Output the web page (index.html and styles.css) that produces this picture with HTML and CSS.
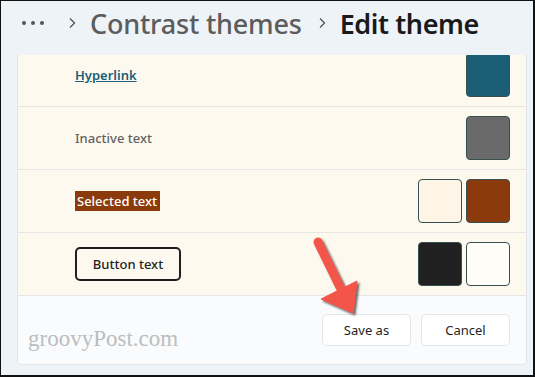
FILE: index.html
```html
<!DOCTYPE html>
<html lang="en">
<head>
    <meta charset="UTF-8">
    <meta name="viewport" content="width=device-width, initial-scale=1.0">
    <title>Edit theme</title>
    <link rel="stylesheet" href="styles.css">
</head>
<body>
    <div class="frame">
        <div class="breadcrumb">
            <svg class="more" width="24" height="6" viewBox="0 0 24 6">
                <circle cx="3" cy="3" r="2"/>
                <circle cx="12" cy="3" r="2"/>
                <circle cx="21" cy="3" r="2"/>
            </svg>
            <svg class="chevron" width="8" height="12" viewBox="0 0 8 12">
                <polyline points="2,1.5 6.5,6 2,10.5"/>
            </svg>
            <span class="crumb">Contrast themes</span>
            <svg class="chevron" width="8" height="12" viewBox="0 0 8 12">
                <polyline points="2,1.5 6.5,6 2,10.5"/>
            </svg>
            <span class="crumb current">Edit theme</span>
        </div>

        <div class="panel">
            <div class="list">
                <div class="row">
                    <a class="link-text" href="#">Hyperlink</a>
                    <div class="swatches">
                        <span class="swatch teal"></span>
                    </div>
                </div>
                <div class="row">
                    <span class="inactive-text">Inactive text</span>
                    <div class="swatches">
                        <span class="swatch gray"></span>
                    </div>
                </div>
                <div class="row">
                    <span class="selected-text">Selected text</span>
                    <div class="swatches">
                        <span class="swatch cream"></span>
                        <span class="swatch rust"></span>
                    </div>
                </div>
                <div class="row">
                    <span class="button-text">Button text</span>
                    <div class="swatches">
                        <span class="swatch black"></span>
                        <span class="swatch white"></span>
                    </div>
                </div>
            </div>
            <div class="footer">
                <button class="btn">Save as</button>
                <button class="btn">Cancel</button>
            </div>
        </div>

        <div class="watermark">groovyPost.com</div>

        <svg class="arrow" width="60" height="90" viewBox="0 0 60 90">
            <defs>
                <filter id="shade" x="-30%" y="-30%" width="160%" height="160%">
                    <feDropShadow dx="2" dy="2" stdDeviation="1.2" flood-color="#333" flood-opacity="0.75"/>
                </filter>
            </defs>
            <g filter="url(#shade)" fill="#f4544a" stroke="#f4544a">
                <line x1="8" y1="7" x2="31" y2="54" stroke-width="9" stroke-linecap="round"/>
                <polygon points="11,64 47,46 43,78" stroke-width="1" stroke-linejoin="round"/>
            </g>
        </svg>
    </div>
</body>
</html>
```

FILE: styles.css
```css
* {
    box-sizing: border-box;
}
body {
    margin: 0;
    font-family: "Noto Sans", "Open Sans", sans-serif;
}
.frame {
    position: relative;
    width: 535px;
    height: 377px;
    background-color: #eef3f8;
    border-style: solid;
    border-color: #111;
    border-width: 1px 2px 2px 1px;
    overflow: hidden;
}
.breadcrumb {
    display: flex;
    align-items: center;
    height: 54px;
    padding: 0 0 10px 20px;
}
.more {
    fill: #555;
    margin-right: 23px;
}
.chevron {
    fill: none;
    stroke: #555;
    stroke-width: 1.3;
    margin-right: 14px;
}
.crumb {
    font-size: 27px;
    font-weight: 500;
    color: #5c5c5c;
    margin-right: 16px;
    letter-spacing: -0.2px;
}
.crumb.current {
    color: #1a1a1a;
    font-weight: 600;
    letter-spacing: -0.4px;
}
.panel {
    margin-left: 16px;
    width: 510px;
    height: 310px;
    overflow: hidden;
    border-radius: 0 0 5px 5px;
    border: 1px solid #e4e7ea;
    border-top: none;
    background-color: #f9fbfd;
}
.list {
    margin-top: -11px;
}
.row {
    display: flex;
    align-items: center;
    justify-content: space-between;
    height: 63px;
    padding: 0 16px 0 57px;
    background-color: #fef9ef;
    border-bottom: 1px solid #e5e6e6;
}
.link-text {
    font-size: 13px;
    font-weight: 600;
    color: #1c5e75;
    text-decoration: underline;
}
.inactive-text {
    font-size: 13px;
    font-weight: 500;
    color: #626262;
}
.selected-text {
    font-size: 13px;
    font-weight: 500;
    color: #fff;
    background-color: #8b3a0c;
    padding: 1px 3px 1px 2px;
}
.button-text {
    display: flex;
    align-items: center;
    justify-content: center;
    width: 106px;
    height: 34px;
    border: 2px solid #1f1f1f;
    border-radius: 5px;
    font-size: 13px;
    font-weight: 500;
    color: #1f1f1f;
}
.swatches {
    display: flex;
    gap: 4px;
}
.swatch {
    width: 44px;
    height: 44px;
    border-radius: 4px;
    border: 1px solid #36504f;
}
.teal { background-color: #1c5e75; }
.gray { background-color: #6a6a6a; }
.cream { background-color: #fff5e6; }
.rust { background-color: #8b3a0c; }
.black { background-color: #202020; }
.white { background-color: #fffdf7; }
.footer {
    display: flex;
    justify-content: flex-end;
    align-items: center;
    gap: 10px;
    height: 69px;
    padding: 0 16px 2px 0;
}
.btn {
    width: 89px;
    height: 32px;
    background-color: #fff;
    border: 1px solid #e3e5e8;
    border-radius: 5px;
    font-family: "Noto Sans", "Open Sans", sans-serif;
    font-size: 13px;
    color: #1f1f1f;
}
.watermark {
    position: absolute;
    left: 27px;
    top: 325px;
    font-family: "Liberation Serif", serif;
    font-size: 23px;
    color: #bdbdbd;
}
.arrow {
    position: absolute;
    left: 309px;
    top: 234px;
}
```
